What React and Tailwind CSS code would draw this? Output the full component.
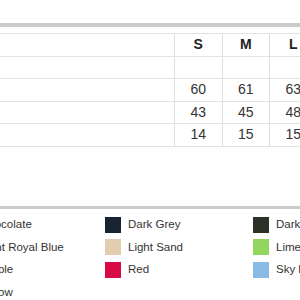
const SIZES = ["S", "M", "L", "XL"];

const ROWS = [
  { label: "", values: ["", "", "", ""] },
  { label: "Length", values: ["60", "61", "63", "66"] },
  { label: "Width", values: ["43", "45", "48", "51"] },
  { label: "Sleeve", values: ["14", "15", "15", "16"] },
];

const COLOURS = [
  ["Chocolate", "#5b3a29"],
  ["Dark Grey", "#182332"],
  ["Dark Green", "#2d3229"],
  ["Light Royal Blue", "#3f6fd1"],
  ["Light Sand", "#e2cdb1"],
  ["Lime Green", "#92d660"],
  ["Purple", "#5a2a82"],
  ["Red", "#d90b45"],
  ["Sky Blue", "#8bb9e6"],
  ["Yellow", "#f5d63a"],
];

function Row({ cells, head }) {
  return (
    <div className="grid grid-cols-[174px_47.5px_47.5px_47.5px_47.5px] h-[22.5px] border-b border-[#e2e2e2]">
      <div className="flex items-center pl-2 text-transparent">{cells[0]}</div>
      {cells.slice(1).map((c, i) => (
        <div
          key={i}
          className={
            "flex items-center justify-center border-l border-[#dedede] " +
            (head ? "font-bold text-[#222]" : "")
          }
        >
          {c}
        </div>
      ))}
    </div>
  );
}

export default function App() {
  return (
    <div className="w-[300px] h-[300px] overflow-hidden bg-white text-[#333] font-['Liberation_Sans',Arial,sans-serif]">
      <div className="h-[23px]" />
      <div className="h-1 bg-[#cbcbcb]" />

      <div className="mt-[6px] text-[14px] border-t border-[#e2e2e2] w-[400px]">
        <Row head cells={["Size", ...SIZES]} />
        {ROWS.map((r, i) => (
          <Row key={i} cells={[r.label, ...r.values]} />
        ))}
      </div>

      <div className="mt-[59px] h-[3px] bg-[#cbcbcb]" />

      <div className="mt-[5px] ml-[-43px] grid grid-cols-[148px_148px_148px] text-[11.5px] w-[444px]">
        {COLOURS.map(([name, hex]) => (
          <div key={name} className="flex items-center h-[22.5px]">
            <span className="w-4 h-4 shrink-0" style={{ background: hex }} />
            <span className="ml-[7px] whitespace-nowrap">{name}</span>
          </div>
        ))}
      </div>
    </div>
  );
}
